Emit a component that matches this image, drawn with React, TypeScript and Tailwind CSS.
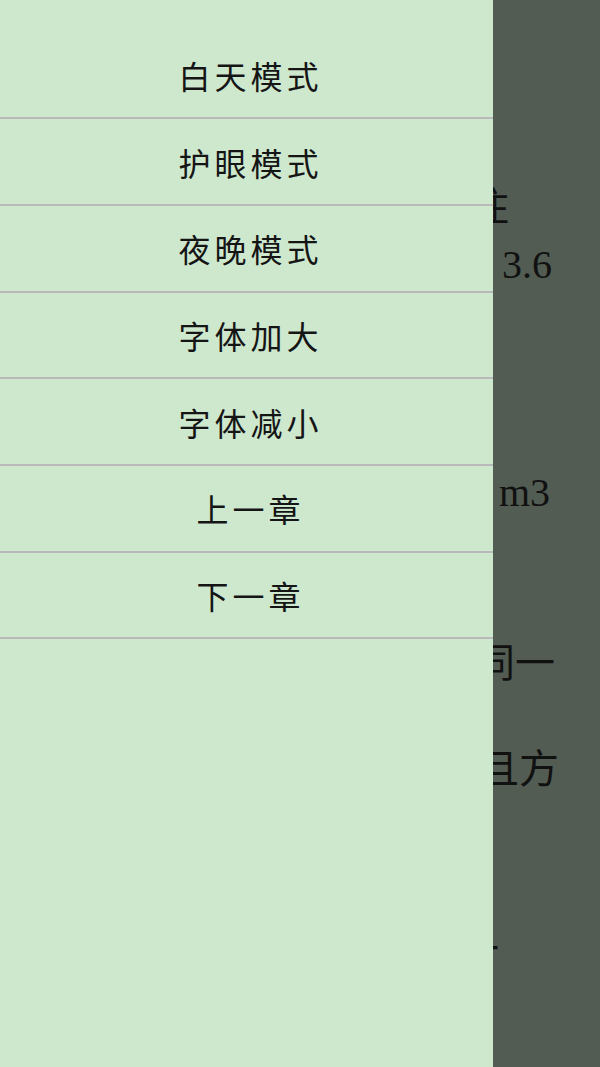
import React from "react";

const items = ["白天模式", "护眼模式", "夜晚模式", "字体加大", "字体减小", "上一章", "下一章"];

function Line({ text, className }: { text: string; className: string }) {
  return (
    <div className={"h-[57px] leading-[57px] flex justify-end " + className}>
      <span className="shrink-0 whitespace-nowrap">{text}</span>
    </div>
  );
}

export default function App() {
  return (
    <div className="flex w-[600px] h-[1067px] overflow-hidden bg-[#525c52]">
      {/* drawer */}
      <div
        className="w-[493px] shrink-0 h-full bg-[#cee8ce] flex flex-col pt-[32.7px]"
        style={{ fontFamily: '"Noto Sans CJK SC", sans-serif' }}
      >
        {items.map((t) => (
          <div
            key={t}
            className="h-[86.67px] border-b-2 border-[#b9b9bb] flex items-center justify-center text-[32px] tracking-[4px] pl-[8px] text-[#151515]"
          >
            {t}
          </div>
        ))}
      </div>

      {/* visible strip of the reading page behind the scrim */}
      <div
        className="flex-1 min-w-0 overflow-hidden flex flex-col text-[40px] text-[#111]"
        style={{ fontFamily: '"Liberation Serif", "Noto Sans CJK SC", serif' }}
      >
        <div className="h-[179px] shrink-0" />
        <Line text="住" className="pr-[91px]" />
        <Line text="3.6" className="pr-[48px]" />
        <div className="h-[171px] shrink-0" />
        <Line text="m3" className="pr-[50px]" />
        <div className="h-[114px] shrink-0" />
        <Line text="同一" className="pr-[45px]" />
        <div className="h-[49px] shrink-0" />
        <Line text="且方" className="pr-[41px]" />
        <div className="h-[123px] shrink-0" />
        <Line text="一" className="pr-[101px]" />
      </div>
    </div>
  );
}
